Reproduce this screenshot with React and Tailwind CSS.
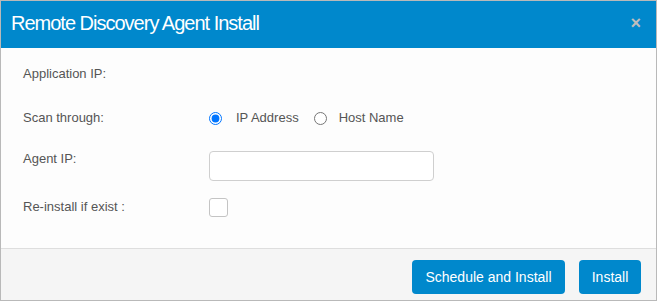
import React, { useState } from "react";

function App() {
  const [scan, setScan] = useState("ip");
  const [agentIp, setAgentIp] = useState("");
  const [reinstall, setReinstall] = useState(false);

  return (
    <div className="w-[657px] h-[301px] border border-[#b9b9b9] bg-white flex flex-col font-['Liberation_Sans',Arial,sans-serif] text-[13px] text-[#555]">
      {/* header */}
      <div className="h-[47px] bg-[#0088cc] flex items-center justify-between pl-[10px] pr-[15px]">
        <h2 className="text-white text-[20px] tracking-[-1px] leading-none pb-[3px]">
          Remote Discovery Agent Install
        </h2>
        <button className="text-[#bdbdbd] text-[18px] font-bold leading-none pb-[3px]">×</button>
      </div>

      {/* body */}
      <div className="flex-1 bg-[#fdfdfd] pl-[22px] pt-[16px] flex flex-col">
        <div className="flex items-center h-[20px]">
          <span className="w-[186px]">Application IP:</span>
        </div>
        <div className="flex items-center h-[20px] mt-[24px]">
          <span className="w-[186px]">Scan through:</span>
          <label className="flex items-center">
            <input
              type="radio"
              name="scan"
              className="m-0 w-[13px] h-[13px]"
              checked={scan === "ip"}
              onChange={() => setScan("ip")}
            />
            <span className="ml-[14px]">IP Address</span>
          </label>
          <label className="flex items-center ml-[15px]">
            <input
              type="radio"
              name="scan"
              className="m-0 w-[13px] h-[13px]"
              checked={scan === "host"}
              onChange={() => setScan("host")}
            />
            <span className="ml-[12px]">Host Name</span>
          </label>
        </div>
        <div className="flex items-start mt-[23px]">
          <span className="w-[186px] leading-[16px]">Agent IP:</span>
          <input
            type="text"
            value={agentIp}
            onChange={(e) => setAgentIp(e.target.value)}
            className="w-[225px] h-[30px] border border-[#cfcfcf] rounded-[4px] bg-white px-2 outline-none"
          />
        </div>
        <div className="flex items-center h-[20px] mt-[16px]">
          <span className="w-[186px]">Re-install if exist :</span>
          <button
            onClick={() => setReinstall(!reinstall)}
            className="w-[19px] h-[19px] border border-[#c4c4c4] rounded-[3px] bg-white"
          >
            {reinstall ? "✓" : ""}
          </button>
        </div>
      </div>

      {/* footer */}
      <div className="h-[52px] border-t border-[#dedede] bg-[#f5f5f5] flex justify-end items-start pt-[11px] pr-[15px] gap-[14px]">
        <button className="h-[34px] w-[153px] rounded-[4px] bg-[#0088cc] text-white text-[14px]">
          Schedule and Install
        </button>
        <button className="h-[34px] w-[62px] rounded-[4px] bg-[#0088cc] text-white text-[14px]">
          Install
        </button>
      </div>
    </div>
  );
}

export default App;
